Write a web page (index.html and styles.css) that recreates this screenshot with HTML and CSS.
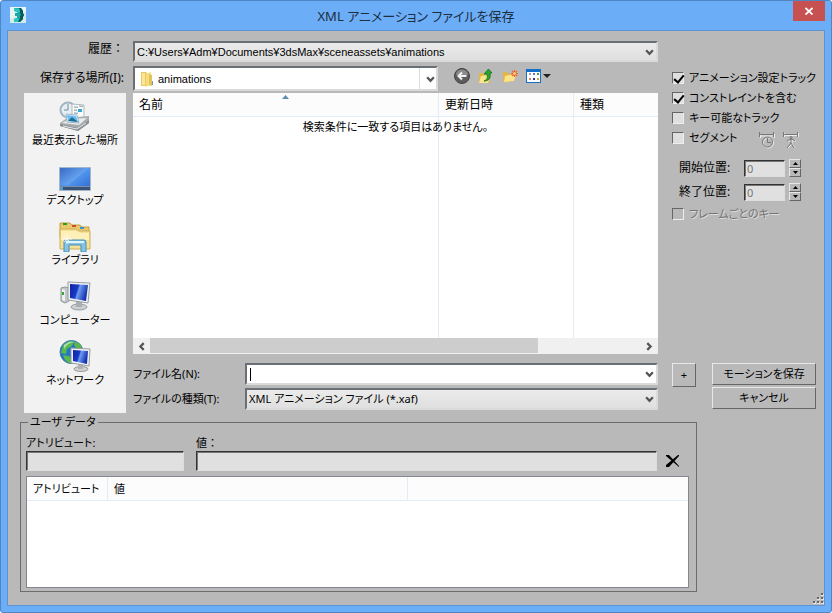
FILE: index.html
```html
<!DOCTYPE html>
<html lang="ja">
<head>
<meta charset="utf-8">
<meta name="viewport" content="width=device-width, initial-scale=1">
<title>XML アニメーション ファイルを保存</title>
<link rel="stylesheet" href="styles.css">
</head>
<body>
<main class="window">
  <header class="titlebar">
    <svg class="app-icon" viewBox="0 0 16 16" aria-hidden="true">
      <rect width="16" height="16" fill="#d3ece9"/>
      <path d="M0 0h16v5L0 12z" fill="#eaf5f3"/>
      <path d="M4 1h7l2 3v2l1 2-1 2v2l-3 3H4v-3l3-1V9H5V6h2V5L4 4z" fill="#1ba7a5"/>
      <path d="M9 1h2l2 3v2l1 2-1 2v2l-3 3H8l2-4V9l1-1-1-2V4z" fill="#07595f"/>
      <path d="M4 1l5 1 1 3-3 1V5L4 4zM4 12l3-1 2 1-1 3H4z" fill="#2cc8bd"/>
    </svg>
    <h1 class="title">XML アニメーション ファイルを保存</h1>
    <button class="close" type="button" aria-label="閉じる">
      <svg width="8" height="8" viewBox="0 0 8 8"><path d="M.5 1l7 6.500M7.500 1l-7 6.500" stroke="#fff" stroke-width="1.800"/></svg>
    </button>
  </header>

  <form class="client">
    <div class="upper">
      <div class="browser">
        <label class="row-label full" for="history">履歴：</label>
        <div class="combo history">
          <select id="history"><option>C:¥Users¥Adm¥Documents¥3dsMax¥sceneassets¥animations</option></select>
          <svg class="chevron" viewBox="0 0 8 6"><path d="M1 1l3 3.200L7 1" /></svg>
        </div>

        <label class="row-label" for="folder">保存する場所(I):</label>
        <div class="folder-row">
          <div class="combo folder">
            <select id="folder"><option>animations</option></select>
            <svg class="folder-icon" viewBox="0 0 14 16" aria-hidden="true">
              <path d="M1 1h5l1 1v13H1z" fill="#e9c95c"/>
              <path d="M2 2h3v12H2z" fill="#f8e69b"/>
              <path d="M6 3l5-2v13l-5 2z" fill="#f5dc81"/>
              <path d="M9 3l3 1v11l-3-1z" fill="#e3c25a"/>
              <path d="M12 10h1v4h-1z" fill="#7c9ab5"/>
            </svg>
            <svg class="chevron" viewBox="0 0 8 6"><path d="M1 1l3 3.200L7 1" /></svg>
          </div>
          <div class="tools">
            <button type="button" aria-label="戻る">
              <svg width="16" height="16" viewBox="0 0 16 16">
                <circle cx="8" cy="8" r="7.500" fill="#5d5d5d" stroke="#424242"/>
                <path d="M2 7a6 5.500 0 0 1 12 0z" fill="#8b8b8b"/>
                <path d="M12.500 8H5M8 4.500L4.500 8 8 11.500" fill="none" stroke="#f2f2f2" stroke-width="2"/>
              </svg>
            </button>
            <button type="button" aria-label="上へ">
              <svg width="16" height="16" viewBox="0 0 16 16">
                <path d="M1 5h4l1 2h7l-2 8H1z" fill="#e1b840"/>
                <path d="M3 8l9-1-2 8H1z" fill="#fae58c"/>
                <path d="M6 13c3-1 4-3 3-7H6l4.500-5L14 5h-2c1 5-1 8-6 8z" fill="#27a62a" stroke="#14701b" stroke-width=".8"/>
              </svg>
            </button>
            <button type="button" aria-label="新しいフォルダー">
              <svg width="16" height="16" viewBox="0 0 16 16">
                <path d="M1 4h4l1 2h6v7l-9 1H1z" fill="#e2b544"/>
                <path d="M3 8l4-1h7l-2 6-10 1z" fill="#fbe389"/>
                <path d="M12.500 2v7M9 5.500h7M10 3l5 5M15 3l-5 5" stroke="#ef6331" stroke-width="1.200"/>
                <circle cx="12.500" cy="5.500" r="1.300" fill="#ffe488"/>
              </svg>
            </button>
            <button type="button" aria-label="表示メニュー">
              <svg width="25" height="16" viewBox="0 0 25 16">
                <path d="M0 1h15v14H0z" fill="#1370c8"/>
                <path d="M1 4h13v10H1z" fill="#fff"/>
                <path d="M3 5h2v2H3z" fill="#9a9ac4"/><path d="M7 5h2v2H7z" fill="#5f7fc0"/><path d="M11 5h2v2h-2z" fill="#46a04c"/>
                <path d="M3 10h2v2H3z" fill="#e68058"/><path d="M7 10h2v2H7z" fill="#243c94"/><path d="M11 10h2v2h-2z" fill="#c7a63b"/>
                <path d="M17 6h8l-4 4z" fill="#222"/>
              </svg>
            </button>
          </div>
        </div>

        <nav class="places" aria-label="場所">
          <a href="#recent">
            <svg viewBox="0 0 32 32" aria-hidden="true">
              <circle cx="9" cy="10" r="7.500" fill="#e7eff3" stroke="#a0b6c1" stroke-width="2"/>
              <path d="M9 4v6H5" fill="none" stroke="#6e8a99"/>
              <path d="M13 4l12 1v15l-12-2z" fill="#fafafa" stroke="#b1bbc1"/>
              <path d="M15 7l4 .3M15 10l3 .3M15 13l4 .3M20 6l4 .4" stroke="#8195a6"/>
              <path d="M19 9h4v3h-4z" fill="#3ba6cf"/>
              <path d="M1 23l7-5 22-2v7l-11 8L1 26z" fill="#a8acae"/>
              <path d="M3 23l7-4 18-1-8 7z" fill="#e9eced"/>
              <path d="M7 14l11 1 2 8-12-1z" fill="#fff" stroke="#98b5c9"/>
              <path d="M8 15l9 1 2 6-10-1z" fill="#6bbcf0"/>
              <path d="M9 21l4-4 6 5z" fill="#1e7193"/>
              <path d="M1 24l18 4 11-8v3l-11 8L1 26z" fill="#888d90"/>
              <path d="M4 26l14 3 9-6" fill="none" stroke="#e7eaec"/>
            </svg>
            <span>最近表示した場所</span></a>
          <a href="#desktop">
            <svg viewBox="0 0 32 32" aria-hidden="true">
              <defs><linearGradient id="sky" x1="0" y1="0" x2="1" y2="1"><stop stop-color="#1b54ba"/><stop offset=".5" stop-color="#5195ed"/><stop offset="1" stop-color="#2a65cd"/></linearGradient></defs>
              <path d="M.5 7.500h31v23H.5z" fill="url(#sky)" stroke="#a2b7cb"/>
              <path d="M1 8h29L9 25H1z" fill="#fff" opacity=".12"/>
              <path d="M1 26h30v4H1z" fill="#3b5376"/>
              <path d="M1 26.500h30" stroke="#7690b0"/><path d="M1 27h3v3H1z" fill="#559ac5"/>
            </svg>
            <span>デスクトップ</span></a>
          <a href="#library">
            <svg viewBox="0 0 32 32" aria-hidden="true">
              <path d="M1 8V3h10l2 2h8l2 2h7v10H1z" fill="#eac76a" stroke="#c49d43"/>
              <path d="M4 4h4" stroke="#279c2b" stroke-width="2"/><path d="M13 6h4" stroke="#c9502d" stroke-width="2"/><path d="M21 8h4" stroke="#3198cf" stroke-width="2"/>
              <path d="M1 9h16l3 2h11v18H1z" fill="#f6df96" stroke="#cfae59"/>
              <path d="M2 11h16l3 2h9v7H2z" fill="#fff0b9"/>
              <path d="M5 32V22q0-2 2-2h18q2 0 2 2v10h-5v-7H10v7z" fill="#86c4e3" stroke="#478fb4"/>
              <path d="M7 22h18" stroke="#dff4fc" stroke-width="2"/>
              <path d="M8 14v10M3 19h10M5 16l6 6M11 16l-6 6" stroke="#fff" stroke-width=".7"/>
            </svg>
            <span>ライブラリ</span></a>
          <a href="#computer">
            <svg viewBox="0 0 32 32" aria-hidden="true">
              <defs><linearGradient id="screen" x2="1" y2=".3"><stop stop-color="#1420a5"/><stop offset=".45" stop-color="#153cc5"/><stop offset=".55" stop-color="#6f9cf1"/><stop offset="1" stop-color="#1432b1"/></linearGradient></defs>
              <path d="M2 8l4-1 4 1v13l-4 2-4-2z" fill="#c2c7c9" stroke="#8e9498"/>
              <path d="M3 9l3 1v11l-3-1z" fill="#eef0f0"/><path d="M3 12h2v3H3z" fill="#36a735"/>
              <ellipse cx="20" cy="27" rx="8" ry="3" fill="#cdd0d2" stroke="#989da0"/>
              <path d="M17 21h6v6h-6z" fill="#aaaeb1"/>
              <path d="M9 2l22 1-2 20-20-3z" fill="#eef0f1" stroke="#999fa4"/>
              <path d="M11 4l18 1-2 16-16-3z" fill="url(#screen)"/>
            </svg>
            <span>コンピューター</span></a>
          <a href="#network">
            <svg viewBox="0 0 32 32" aria-hidden="true">
              <circle cx="12.500" cy="12" r="11.500" fill="#2375c7" stroke="#3d80a9"/>
              <path d="M4 5l6-4 5 1-2 4-5 3-1 5-5-1zM16 1l6 4 1 5-5-1-3-4zM4 15l6 1 3 4-2 4-5-4z" fill="#5bb84c"/>
              <path d="M5 5q6-5 11-3-8 1-11 7z" fill="#cbf1d0" opacity=".7"/>
              <ellipse cx="22" cy="29" rx="7" ry="2.500" fill="#cfd2d3" stroke="#999"/>
              <path d="M19 24h5v5h-5z" fill="#aeb2b5"/>
              <path d="M12 8l19 1-1 17-18-3z" fill="#eff1f2" stroke="#989ea3"/>
              <path d="M14 10l15 1-1 13-14-3z" fill="url(#screen)"/>
            </svg>
            <span>ネットワーク</span></a>
        </nav>

        <div class="pane">
          <div class="files">
            <table class="list">
              <colgroup><col class="col-name"><col class="col-date"><col></colgroup>
              <thead><tr><th>名前</th><th>更新日時</th><th>種類</th></tr></thead>
              <tbody><tr><td></td><td></td><td></td></tr></tbody>
            </table>
            <svg class="sort" viewBox="0 0 7 4" aria-hidden="true"><path d="M0 4l3.500-4L7 4z" fill="#5b8fb3"/></svg>
            <p class="empty">検索条件に一致する項目はありません。</p>
          </div>
          <div class="scrollbar">
            <button type="button" aria-label="左へスクロール"><svg viewBox="0 0 6 8"><path d="M5 1L2 4l3 3"/></svg></button>
            <div class="track"><div class="thumb"></div></div>
            <button type="button" aria-label="右へスクロール"><svg viewBox="0 0 6 8"><path d="M1 1l3 3-3 3"/></svg></button>
          </div>
          <div class="fields">
            <label for="filename">ファイル名(N):</label>
            <div class="combo filename">
              <input id="filename" type="text">
              <span class="caret"></span>
              <svg class="chevron" viewBox="0 0 8 6"><path d="M1 1l3 3.200L7 1" /></svg>
            </div>
            <label for="filetype">ファイルの種類(T):</label>
            <div class="combo filetype">
              <select id="filetype"><option>XML アニメーション ファイル (*.xaf)</option></select>
              <svg class="chevron" viewBox="0 0 8 6"><path d="M1 1l3 3.200L7 1" /></svg>
            </div>
          </div>
        </div>
      </div>

      <div class="options">
        <div class="settings">
          <label class="check"><input type="checkbox" checked>アニメーション設定トラック</label>
          <label class="check"><input type="checkbox" checked>コンストレイントを含む</label>
          <label class="check"><input type="checkbox">キー可能なトラック</label>
          <div class="segment">
            <label class="check"><input type="checkbox">セグメント</label>
            <button type="button" disabled aria-label="時間範囲">
              <svg width="16" height="17" viewBox="0 0 16 17"><g fill="none" stroke="#eee" transform="translate(1 1)"><path d="M.5 1v4M14.500 1v4M1 3h13"/><circle cx="8.500" cy="10" r="5"/></g><g fill="none" stroke="#777"><path d="M.5 0v5M14.500 0v5M1 2.500h13M8.500 6v4.500H12"/><circle cx="8.500" cy="10" r="5"/></g></svg>
            </button>
            <button type="button" disabled aria-label="アニメーション範囲">
              <svg width="16" height="17" viewBox="0 0 16 17"><g fill="none" stroke="#eee" transform="translate(1 1)"><path d="M.5 0v4M14.500 0v4M1 2.500h13M4 8h8M8 7v4l-4 4M8 11l3 4"/></g><g fill="none" stroke="#777"><path d="M.5 0v5M14.500 0v5M1 2.500h13M4 9l3-2h2l3 2M8 7v4l-4 5M8 11l3 5"/><circle cx="8" cy="5.500" r="1"/></g></svg>
            </button>
          </div>
          <div class="range">
            <label for="start">開始位置:</label>
            <input id="start" type="text" value="0" disabled>
            <span class="spin"><button type="button" aria-label="開始位置を増やす"><svg viewBox="0 0 5 3"><path d="M0 3l2.500-3L5 3z"/></svg></button><button type="button" aria-label="開始位置を減らす"><svg viewBox="0 0 5 3"><path d="M0 0h5L2.500 3z"/></svg></button></span>
          </div>
          <div class="range">
            <label for="end">終了位置:</label>
            <input id="end" type="text" value="0" disabled>
            <span class="spin"><button type="button" aria-label="終了位置を増やす"><svg viewBox="0 0 5 3"><path d="M0 3l2.500-3L5 3z"/></svg></button><button type="button" aria-label="終了位置を減らす"><svg viewBox="0 0 5 3"><path d="M0 0h5L2.500 3z"/></svg></button></span>
          </div>
          <label class="check off"><input type="checkbox" disabled>フレームごとのキー</label>
        </div>
        <div class="actions">
          <button class="push plus" type="button">+</button>
          <div class="commit">
            <button class="push" type="button">モーションを保存</button>
            <button class="push" type="button">キャンセル</button>
          </div>
        </div>
      </div>
    </div>

    <fieldset class="userdata">
      <legend>ユーザ データ</legend>
      <div class="entry">
        <div class="attribute"><label for="attribute">アトリビュート:</label><input id="attribute" type="text"></div>
        <div class="value"><label class="full" for="value">値：</label><input id="value" type="text"></div>
        <button class="remove" type="button" aria-label="削除"><svg width="14" height="14" viewBox="0 0 14 14"><path d="M0 1h3l10 11v1L0 2zM0 11L12 1h1v1L3 13H0z"/></svg></button>
      </div>
      <div class="attributes">
        <table class="list">
          <colgroup><col class="col-attribute"><col class="col-value"><col></colgroup>
          <thead><tr><th>アトリビュート</th><th>値</th><th></th></tr></thead>
        </table>
      </div>
    </fieldset>
    <svg class="grip" viewBox="0 0 12 12" aria-hidden="true">
      <path d="M9 1h3v2H9zM5 5h3v2H5zM9 5h3v2H9zM1 9h3v2H1zM5 9h3v2H5zM9 9h3v2H9z" fill="#e4e4e4"/>
      <path d="M9 0h2v2H9zM5 4h2v2H5zM9 4h2v2H9zM1 8h2v2H1zM5 8h2v2H5zM9 8h2v2H9z" fill="#666"/>
    </svg>
  </form>
</main>
</body>
</html>
```
FILE: styles.css
```css
* { box-sizing: border-box; }

body {
  margin: 0;
  background: #fff;
  color: #000;
  font: 11px/16px "Noto Sans", "Noto Sans CJK JP", sans-serif;
  font-feature-settings: "palt";
}

button, input, select {
  font: inherit;
  font-feature-settings: inherit;
  color: inherit;
  margin: 0;
  padding: 0;
  border: 0;
  border-radius: 0;
  outline: 0;
}

button { background: none; }
svg { display: block; }
label { white-space: nowrap; }
.full { font-feature-settings: normal; }

/* Window frame */
.window {
  display: flex;
  flex-direction: column;
  min-height: 100vh;
  padding: 0 6px 6px;
  border: 1px solid #4f85c2;
  border-radius: 3px;
  background: #6badf7;
}

.titlebar {
  display: grid;
  grid-template-columns: 32px 1fr 32px;
  height: 29px;
}

.app-icon { width: 16px; height: 16px; margin: 6px 0 0 3px; }

.title {
  margin: 0;
  font-size: 13px;
  font-weight: 400;
  line-height: 30px;
  text-align: center;
  color: #1e2d40;
}

.close {
  display: grid;
  place-items: center;
  height: 20px;
  background: #c75050;
}

.client {
  position: relative;
  flex: 1;
  display: flex;
  flex-direction: column;
  padding: 10px 8px 13px 16px;
  border: 1px solid #5c93d3;
  background: #b9b9b9;
}

.upper { display: flex; gap: 14px; }

/* Combo boxes */
.combo {
  position: relative;
  border: 2px solid;
  border-color: #6a6f75 #dadada #dadada #6a6f75;
  background: linear-gradient(#ebebeb, #dfdfdf);
}

.combo select, .combo input {
  display: block;
  width: 100%;
  height: 100%;
  appearance: none;
  background: none;
  padding: 0 20px 0 2px;
}

.chevron {
  position: absolute;
  right: 2px;
  top: 50%;
  width: 9px;
  height: 7px;
  margin-top: -3px;
  pointer-events: none;
}

.chevron path, .scrollbar path { fill: none; stroke: #555; stroke-width: 2; }

/* File browser */
.browser {
  flex: 1;
  min-width: 0;
  display: grid;
  grid-template-columns: 102px 1fr;
  grid-template-rows: 21px 31px auto;
  column-gap: 7px;
}

.row-label { margin-right: 2px; font-size: 12px; text-align: right; }
.row-label[for="folder"] { margin-top: 8px; }
.history { font-family: "Liberation Sans", "Noto Sans CJK JP", sans-serif; }
.folder-row { display: flex; align-items: flex-start; margin-top: 4px; }

.folder {
  width: 305px;
  height: 25px;
  background: #fff;
  font-family: "Liberation Sans", "Noto Sans CJK JP", sans-serif;
}

.folder select { padding-left: 23px; }
.folder-icon { position: absolute; left: 5px; top: 3px; width: 14px; height: 16px; }
.folder .chevron { right: 1px; }

.folder::after {
  content: "";
  position: absolute;
  inset: 0 16px 0 auto;
  border-right: 1px solid #ddd;
}

.tools { display: flex; gap: 8px; padding: 2px 0 0 16px; }

.places {
  display: flex;
  flex-direction: column;
  gap: 12px;
  height: 320px;
  padding-top: 7px;
  background: #f2f2f2;
  text-align: center;
}

.places a { color: #000; text-decoration: none; white-space: nowrap; }
.places svg { width: 32px; height: 32px; margin: 0 auto; }
.places span { display: block; }

.pane { display: flex; flex-direction: column; }
.files { position: relative; height: 245px; background: #fff; }

.list {
  width: 100%;
  height: 100%;
  table-layout: fixed;
  border-collapse: separate;
  border-spacing: 0;
}

.list th {
  height: 24px;
  padding: 0 6px;
  font-weight: 400;
  text-align: left;
  white-space: nowrap;
  background: #fcfcfc;
  border-bottom: 1px solid #e3edf8;
}

.files th { font-size: 12px; }
.list th + th, .list td + td { border-left: 1px solid #e3edf8; }
.col-name { width: 305px; }
.col-date { width: 135px; }

.sort { position: absolute; left: 149px; top: 2px; width: 7px; height: 4px; }

.empty {
  position: absolute;
  inset: 26px 0 auto;
  margin: 0;
  text-align: center;
}

.scrollbar { display: flex; height: 16px; background: #f0f0f0; }
.scrollbar button { width: 17px; display: grid; place-items: center; }
.scrollbar svg { width: 7px; height: 9px; }
.track { flex: 1; }
.thumb { width: 79%; height: 15px; background: #cdcdcd; }

.fields {
  display: grid;
  grid-template-columns: 112px 1fr;
  row-gap: 3px;
  align-items: center;
  margin-top: 9px;
}

.filename { height: 22px; background: #fff; }
.filetype { height: 22px; }

.caret {
  position: absolute;
  left: 3px;
  top: 3px;
  width: 1px;
  height: 13px;
  background: #000;
}

/* Save options */
.options {
  flex: 0 0 144px;
  min-width: 0;
  display: flex;
  flex-direction: column;
  justify-content: space-between;
  padding: 27px 0 4px;
}

.check { display: flex; align-items: center; gap: 5px; height: 20px; }

.check input {
  position: relative;
  appearance: none;
  flex: none;
  width: 12px;
  height: 12px;
  border: 1px solid;
  border-color: #666 #eee #eee #666;
  background: #dfdfdf;
}

.check input:checked::after {
  content: "";
  position: absolute;
  left: 3px;
  top: 0;
  width: 4px;
  height: 8px;
  border: solid #000;
  border-width: 0 2px 2px 0;
  transform: rotate(40deg);
}

.check.off { color: #747474; text-shadow: 1px 1px #ddd; }
.check.off input { background: #b9b9b9; }

.segment { display: flex; gap: 8px; margin-bottom: 8px; }
.segment .check { width: 79px; }
.segment button { padding-top: 4px; height: 20px; }

.range { display: flex; align-items: center; height: 24px; padding-left: 7px; }
.range label { width: 65px; font-size: 12px; }
.range input {
  width: 41px;
  height: 17px;
  padding-left: 2px;
  color: #777;
}

.range input, .attribute input, .value input {
  border: 1px solid;
  border-color: #333 #ddd #ddd #333;
  background: #e0e0e0;
  box-shadow: inset 1px 1px #777;
}

.spin { display: grid; width: 12px; height: 18px; margin-left: 4px; }
.spin button { display: grid; place-items: center; }
.spin svg { width: 5px; height: 3px; }

.spin button, .push {
  border: 1px solid;
  border-color: #e8e8e8 #666 #666 #e8e8e8;
  background: #b9b9b9;
}

.actions { display: flex; justify-content: space-between; align-items: flex-start; }
.plus { width: 24px; height: 24px; }
.commit { display: grid; gap: 2px; width: 104px; }
.commit .push { height: 22px; }

/* User data */
.userdata {
  min-width: 0;
  margin: 1px 119px 0 -4px;
  padding: 5px 7px 3px 5px;
  border: 1px solid #6d6d6d;
}

.userdata legend { margin-left: 2px; padding: 0 2px; }

.entry { display: flex; align-items: flex-end; }
.entry label { display: block; }
.entry input { display: block; width: 100%; height: 20px; }
.attribute { width: 158px; margin-right: 12px; }
.value { flex: 1; }
.remove { margin: 0 9px 3px; }

.attributes {
  min-height: 112px;
  margin-top: 5px;
  border: 1px solid #828790;
  background: #fff;
}

.attributes .list { height: auto; }
.col-attribute { width: 80px; }
.col-value { width: 300px; }

.grip { position: absolute; right: 0; bottom: 0; width: 12px; height: 12px; }
```
